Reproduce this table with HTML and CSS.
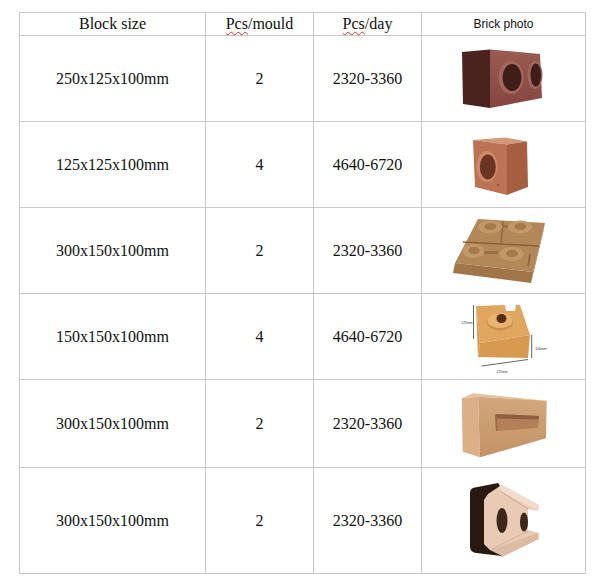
FILE: index.html
```html
<!DOCTYPE html>
<html lang="en">
<head>
<meta charset="utf-8">
<title>Brick sizes</title>
<link rel="stylesheet" href="styles.css">
</head>
<body>
<div class="sheet">
  <div class="cell">Block size</div>
  <div class="cell"><span class="spell">Pcs</span>/mould</div>
  <div class="cell"><span class="spell">Pcs</span>/day</div>
  <div class="cell sans">Brick photo</div>

  <div class="cell">250x125x100mm</div>
  <div class="cell">2</div>
  <div class="cell">2320-3360</div>
  <div class="cell photo">
    <svg viewBox="422 36 163 85" aria-label="brick 250x125x100">
      <defs>
        <linearGradient id="g1" x1="0" y1="0" x2="0" y2="1">
          <stop offset="0" stop-color="#9a5b52"/>
          <stop offset="1" stop-color="#84463f"/>
        </linearGradient>
      </defs>
      <polygon points="462,52 490,49.5 490,108 463,104" fill="#4a221e"/>
      <polygon points="490,49.5 540,54 542,98 490,108" fill="url(#g1)"/>
      <ellipse cx="511" cy="77.5" rx="12.5" ry="16.5" fill="#a3665b"/>
      <ellipse cx="512" cy="77.5" rx="9.5" ry="13.5" fill="#3f1d19"/>
      <ellipse cx="535" cy="75" rx="7.5" ry="14" fill="#a3665b"/>
      <ellipse cx="535.8" cy="75" rx="5.3" ry="11.5" fill="#3f1d19"/>
    </svg>
  </div>

  <div class="cell">125x125x100mm</div>
  <div class="cell">4</div>
  <div class="cell">4640-6720</div>
  <div class="cell photo">
    <svg viewBox="422 122 163 85" aria-label="brick 125x125x100">
      <polygon points="473,140 505,137.5 527,141.5 507,144.5" fill="#d39878"/>
      <polygon points="473,140 507,144.5 507,195 475,187" fill="#bc7353"/>
      <polygon points="507,144.5 527,141.5 528,187 507,195" fill="#a65e41"/>
      <ellipse cx="487" cy="166.5" rx="10.5" ry="15.5" fill="#cd8a68"/>
      <ellipse cx="487.8" cy="167" rx="8" ry="12.5" fill="#6b3423"/>
      <circle cx="498" cy="185" r="0.9" fill="#7a3a25"/>
    </svg>
  </div>

  <div class="cell">300x150x100mm</div>
  <div class="cell">2</div>
  <div class="cell">2320-3360</div>
  <div class="cell photo">
    <svg viewBox="422 208 163 85" aria-label="brick 300x150x100 interlocking">
      <polygon points="478,219 545,223 533,272 455,263" fill="#b38858"/>
      <polygon points="455,263 533,272 531,283 453,273" fill="#a17547"/>
      <polygon points="545,223 543,233 531,283 533,272" fill="#94693e"/>
      <path d="M463,242 L539,246" stroke="#8c6237" stroke-width="1.6" fill="none"/>
      <path d="M503,221 L501,243" stroke="#8c6237" stroke-width="1.3" fill="none"/>
      <path d="M530,254 L528,266" stroke="#8c6237" stroke-width="1.6" fill="none"/>
      <rect x="500" y="225" width="8" height="3" fill="#9a7044"/>
      <rect x="484" y="251" width="14" height="3" fill="#9a7044"/>
      <ellipse cx="490" cy="227" rx="12" ry="6.5" fill="#c29868"/>
      <ellipse cx="490.5" cy="226.5" rx="6" ry="3.5" fill="#a57949"/>
      <ellipse cx="520" cy="227" rx="12" ry="6.5" fill="#c29868"/>
      <ellipse cx="520.5" cy="226.5" rx="6" ry="3.5" fill="#a57949"/>
      <ellipse cx="473.5" cy="251" rx="11" ry="7" fill="#c29868"/>
      <ellipse cx="474" cy="250.5" rx="5.5" ry="3.8" fill="#a57949"/>
      <ellipse cx="511.5" cy="254" rx="12" ry="7" fill="#c29868"/>
      <ellipse cx="512" cy="253.5" rx="6" ry="3.8" fill="#a57949"/>
    </svg>
  </div>

  <div class="cell">150x150x100mm</div>
  <div class="cell">4</div>
  <div class="cell">4640-6720</div>
  <div class="cell photo">
    <svg viewBox="422 294 163 85" aria-label="brick 150x150x100">
      <polygon points="476,306 505,305 506,311 515,311 516,305 520,305 530,335 480,343" fill="#e0a55f"/>
      <polygon points="480,343 530,335 528,358 478,357" fill="#d89a50"/>
      <polygon points="476,306 480,343 478,357" fill="#d8994f"/>
      <ellipse cx="500" cy="322" rx="13" ry="8.5" fill="#cc8e4a"/>
      <ellipse cx="500" cy="320.5" rx="12.5" ry="7.5" fill="#e8b474"/>
      <ellipse cx="501.5" cy="318.5" rx="5" ry="4.5" fill="#5b2a12"/>
      <g stroke="#222" stroke-width="0.7" fill="none">
        <path d="M473.5,305 L473.5,339"/>
        <path d="M531.7,335 L531.7,358"/>
        <path d="M481.7,366 L528,359.5"/>
      </g>
      <g class="dim">
        <text x="467" y="324" text-anchor="middle">125mm</text>
        <text x="541" y="349.5" text-anchor="middle">100mm</text>
        <text x="502" y="372.5" text-anchor="middle">125mm</text>
      </g>
    </svg>
  </div>

  <div class="cell">300x150x100mm</div>
  <div class="cell">2</div>
  <div class="cell">2320-3360</div>
  <div class="cell photo">
    <svg viewBox="422 380 163 87" aria-label="brick 300x150x100 solid">
      <defs>
        <linearGradient id="g5" x1="0" y1="0" x2="0" y2="1">
          <stop offset="0" stop-color="#d3a87c"/>
          <stop offset="1" stop-color="#c29266"/>
        </linearGradient>
      </defs>
      <polygon points="461.7,398.3 473.3,393.3 546.7,400.7 478,396.7" fill="#e6c39e"/>
      <polygon points="461.7,398.3 478,396.7 480,457.3 462.7,451.7" fill="#dcb087"/>
      <polygon points="478,396.7 546.7,400.7 546,438.3 480,457.3" fill="url(#g5)"/>
      <polygon points="495,414 539,416 538,428 496,431" fill="#b27f59"/>
      <polygon points="495,414 539,416 538.8,419.5 497,418.5" fill="#8f5f40"/>
      <polygon points="495,414 497,418.5 497.5,430.8 496,431" fill="#9a6846"/>
    </svg>
  </div>

  <div class="cell">300x150x100mm</div>
  <div class="cell">2</div>
  <div class="cell">2320-3360</div>
  <div class="cell photo">
    <svg viewBox="422 468 163 105" aria-label="brick 300x150x100 hollow">
      <polygon points="484,496 498,483 539,505 538,511 528,509 528,530 539,533 538,539 502,557 490,550 484,544" fill="#e9cbb5"/>
      <polygon points="498,483 539,505 538,511 500,491" fill="#f1dccb"/>
      <path d="M500,491 L528,509" stroke="#c9a993" stroke-width="1" fill="none"/>
      <path d="M492,549 L528,531" stroke="#cfb09a" stroke-width="1" fill="none"/>
      <polygon points="490,550 538,533 539,539 502,557" fill="#ddbaa2"/>
      <ellipse cx="502" cy="520.5" rx="5.5" ry="12.5" fill="#3d261a"/>
      <ellipse cx="524" cy="522" rx="4" ry="9.5" fill="#3d261a"/>
      <path d="M470,493 Q470,488 475,487.5 L498,483 L500,486 L488,494 L484,500 L484,544 L490,550 L502,556 L476,553 Q470,552 470,547 Z" fill="#2a1912"/>
    </svg>
  </div>
</div>
</body>
</html>
```

FILE: styles.css
```css
html,
body {
  margin: 0;
  background: #ffffff;
}

body {
  font-family: "Liberation Serif", "Times New Roman", serif;
  color: #111111;
}

.sheet {
  display: grid;
  grid-template-columns: 185px 107px 107px 163px;
  grid-template-rows: 22px 85px 85px 85px 85px 87px 105px;
  gap: 1px;
  padding: 1px;
  background: #c8c8c8;
  width: max-content;
  margin: 12px 0 0 19px;
}

.cell {
  background: #ffffff;
  display: flex;
  align-items: center;
  justify-content: center;
  font-size: 16px;
}

.sans {
  font-family: "Liberation Sans", Arial, sans-serif;
  font-size: 12px;
}

.spell {
  text-decoration: underline wavy #d23a2e;
  text-decoration-thickness: 1px;
  text-underline-offset: 2px;
}

.photo svg {
  display: block;
  width: 163px;
  height: 100%;
}

.dim text {
  font-family: "Liberation Sans", Arial, sans-serif;
  font-size: 3.4px;
  fill: #333333;
}
```
